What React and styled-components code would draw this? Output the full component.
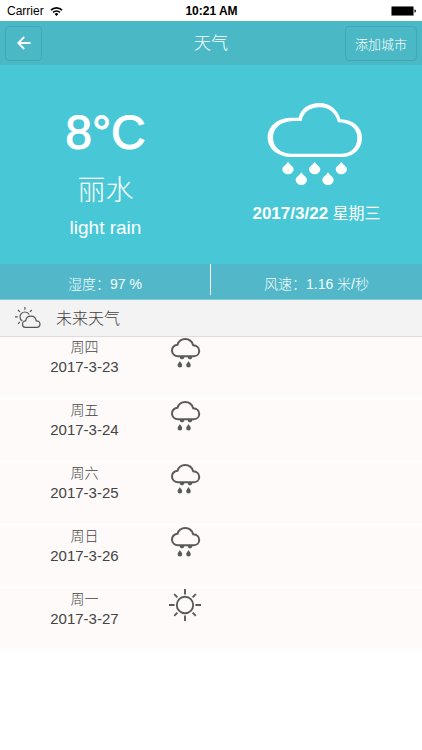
import React from "react";
import styled, { createGlobalStyle } from "styled-components";

const GlobalStyle = createGlobalStyle`
  * { box-sizing: border-box; }
  body {
    margin: 0;
    background: #fff;
    color: #444;
    font-family: "Liberation Sans", "Noto Sans CJK SC", sans-serif;
    font-size: 15px;
  }
  h1, h2, p, ul { margin: 0; padding: 0; font-weight: 300; }
  svg { display: block; }
`;

const StatusBar = styled.div`
  display: grid;
  grid-template-columns: 1fr auto 1fr;
  align-items: center;
  height: 21px;
  padding: 1px 6px 0 7px;
  color: #000;
  font-size: 12px;
`;

const Carrier = styled.div`
  display: flex;
  align-items: center;
  gap: 6px;
`;

const Battery = styled.div`
  justify-self: end;
`;

const NavBar = styled.header`
  display: grid;
  grid-template-columns: 1fr auto 1fr;
  align-items: center;
  height: 44px;
  padding: 0 5px;
  background: #4ab9c5;
  color: #fff;
`;

const NavButton = styled.button`
  justify-self: ${(p) => (p.$end ? "end" : "start")};
  display: flex;
  align-items: center;
  justify-content: center;
  height: 35px;
  min-width: 37px;
  padding: 0 9px;
  border: 1px solid #3fa9b5;
  border-radius: 4px;
  background: transparent;
  color: #fff;
  font-family: inherit;
  font-size: 13px;
  font-weight: 300;
`;

const Title = styled.h1`
  padding-top: 2px;
  font-size: 17px;
  line-height: 24px;
`;

const Current = styled.section`
  display: grid;
  grid-template-columns: 1fr 1fr;
  padding: 37px 0 24px;
  background: #48c8d6;
  color: #fff;
`;

const CurrentColumn = styled.div`
  display: flex;
  flex-direction: column;
  align-items: center;
`;

const Temperature = styled.p`
  font-size: 48px;
  line-height: 62px;
  -webkit-text-stroke: 1px #fff;
`;

const City = styled.p`
  margin-top: 6px;
  font-size: 28px;
  line-height: 42px;
`;

const Condition = styled.p`
  margin-top: 4px;
  font-size: 19px;
  line-height: 24px;
`;

const Today = styled.p`
  margin-top: 16px;
  font-size: 16px;
  line-height: 24px;
  font-weight: 400;
`;

const TodayDate = styled.strong`
  font-size: 17px;
  font-weight: 700;
`;

const Stats = styled.section`
  display: grid;
  grid-template-columns: 1fr 1fr;
  height: 36px;
  padding-bottom: 4px;
  border-bottom: 1px solid #7fcbd6;
  background: #52b8c9;
  color: #f4fcfd;
`;

const Stat = styled.p`
  display: flex;
  align-items: center;
  justify-content: center;
  padding-top: 6px;
  font-size: 14px;
  white-space: pre;

  &:first-child { border-right: 1px solid #fff; }
`;

const SectionHeader = styled.div`
  display: flex;
  align-items: center;
  gap: 15px;
  height: 37px;
  padding-left: 15px;
  border-bottom: 1px solid #dedcdc;
  background: #f3f3f3;
`;

const SectionTitle = styled.h2`
  padding-top: 2px;
  font-size: 16px;
  line-height: 24px;
`;

const Forecast = styled.ul`
  display: flex;
  flex-direction: column;
  gap: 3px;
  background: linear-gradient(#fffdfd, #fffdfd);
  list-style: none;
`;

const ForecastRow = styled.li`
  display: flex;
  align-items: flex-start;
  height: 60px;
  background: #fefaf9;
`;

const Day = styled.div`
  width: 40%;
  text-align: center;
`;

const Weekday = styled.p`
  font-size: 14px;
  line-height: 20px;
`;

const DayDate = styled.p`
  font-size: 15px;
  line-height: 20px;
`;

const WifiIcon = () => (
  <svg width="13" height="9" viewBox="0 0 13 9" fill="none" stroke="#000" aria-hidden="true">
    <path d="M1 3.2C4 .2 9 .2 12 3.2" strokeWidth="1.7" />
    <path d="M3.1 5.4C5 3.5 8 3.5 9.9 5.4" strokeWidth="1.6" />
    <path d="M6.5 8.9L4.6 6.9Q6.5 5.3 8.4 6.9Z" fill="#000" stroke="none" />
  </svg>
);

const BatteryIcon = () => (
  <svg width="25" height="10" viewBox="0 0 25 10" aria-hidden="true">
    <rect x="0" y="0" width="23" height="10" rx="1.5" fill="#777" />
    <rect x="1" y="1" width="21" height="8" fill="#000" />
    <path d="M23.5 3.3Q25 3.7 25 5T23.5 6.7Z" fill="#000" />
  </svg>
);

const BackIcon = () => (
  <svg width="14" height="14" viewBox="0 0 14 14" fill="none" stroke="#fff" strokeWidth="1.8" aria-hidden="true">
    <path d="M7.2 1L1.2 7L7.2 13M1.4 7H13.5" />
  </svg>
);

const drops = [[143, 215], [223, 215], [303, 215], [183, 247], [263, 247]];

const BigRainIcon = () => (
  <svg width="100" height="84" viewBox="80 36 300 252" fill="#fff" role="img" aria-label="rain">
    <path
      fillRule="evenodd"
      d="M155 201C112 201 82 176 82 143C82 108 112 83 154 83H175C181 55 206 39 238 39C268 39 293 59 300 88C340 89 365 112 365 144C365 178 338 201 305 201ZM155 191H304C331 191 351 172 351 144C351 116 328 97 293 97C286 69 266 52 238 52C210 52 188 67 184 93H158C122 94 98 114 98 143C98 171 122 191 155 191Z"
    />
    {drops.map(([x, y]) => (
      <path key={x} d={`M${x} ${y}c4 9 17 14 17 22a17 16 0 0 1-34 0c0-8 13-13 17-22z`} />
    ))}
  </svg>
);

const RainIcon = () => (
  <svg width="32" height="32" viewBox="0 0 32 32" fill="none" stroke="#5a5a5a" strokeWidth="2" role="img" aria-label="rain">
    <path d="M9 19.2H25C28 19.2 30.2 16.9 30.2 13.9C30.2 10.6 27.6 8.4 24.2 8.2C23 4.4 20 2 16.3 2C12.6 2 9.6 4.2 8.5 7.8C5 8.4 3 10.8 3 13.7C3 16.8 5.6 19.2 9 19.2Z" />
    <g fill="#5a5a5a" stroke="none">
      <path d="M10.8 19.6H15.2V20.4C15.2 22.8 10.8 22.8 10.8 20.4ZM18.8 19.6H23.2V20.4C23.2 22.8 18.8 22.8 18.8 20.4Z" />
      <path d="M10.9 24C11.4 25.6 13.2 26.6 13.2 28.2A2.3 2.3 0 0 1 8.6 28.2C8.6 26.6 10.4 25.6 10.9 24ZM19.5 24C20 25.6 21.8 26.6 21.8 28.2A2.3 2.3 0 0 1 17.2 28.2C17.2 26.6 19 25.6 19.5 24Z" />
    </g>
  </svg>
);

const SunIcon = () => (
  <svg width="32" height="32" viewBox="0 0 32 32" fill="none" stroke="#5a5a5a" strokeWidth="1.9" role="img" aria-label="sunny">
    <circle cx="16" cy="16" r="8.2" />
    <path d="M16 0V5.6M16 26.4V32M0 16H5.6M26.4 16H32M5.2 5.2L8.4 8.4M23.6 23.6L26.8 26.8M26.8 5.2L23.6 8.4M8.4 23.6L5.2 26.8" />
  </svg>
);

const PartlyCloudyIcon = () => (
  <svg width="26" height="22" viewBox="0 0 26 22" fill="none" stroke="#555" strokeWidth="1.2" aria-hidden="true">
    <path d="M10.2 20.4H21.6C23.7 20.4 25 18.9 25 17C25 15 23.4 13.7 21.2 13.8C20.7 11.1 18.6 9.2 15.9 9.2C13 9.2 11 11.2 10.7 13.9C8.8 13.9 7.5 15.3 7.5 17.1C7.5 19 8.7 20.4 10.2 20.4Z" />
    <path d="M7.3 14C5.8 13.1 5 11.6 5 9.9C5 7.2 7.2 5 9.9 5C11.8 5 13.3 6 14.2 7.5" />
    <path d="M9.9 0V2.8M0 9.9H2.8M3 3L4.9 4.9M16.8 3L14.9 4.9M3 16.8L4.9 14.9" />
  </svg>
);

const forecast = [
  { day: "周四", date: "2017-3-23", Icon: RainIcon },
  { day: "周五", date: "2017-3-24", Icon: RainIcon },
  { day: "周六", date: "2017-3-25", Icon: RainIcon },
  { day: "周日", date: "2017-3-26", Icon: RainIcon },
  { day: "周一", date: "2017-3-27", Icon: SunIcon },
];

export default function App() {
  return (
    <>
      <GlobalStyle />
      <StatusBar>
        <Carrier>Carrier <WifiIcon /></Carrier>
        <strong>10:21 AM</strong>
        <Battery><BatteryIcon /></Battery>
      </StatusBar>
      <NavBar>
        <NavButton type="button" aria-label="返回"><BackIcon /></NavButton>
        <Title>天气</Title>
        <NavButton type="button" $end>添加城市</NavButton>
      </NavBar>
      <main>
        <Current>
          <CurrentColumn>
            <Temperature>8°C</Temperature>
            <City>丽水</City>
            <Condition>light rain</Condition>
          </CurrentColumn>
          <CurrentColumn>
            <BigRainIcon />
            <Today><TodayDate>2017/3/22</TodayDate> 星期三</Today>
          </CurrentColumn>
        </Current>
        <Stats>
          <Stat>湿度：97 %</Stat>
          <Stat>风速：1.16 米/秒</Stat>
        </Stats>
        <SectionHeader>
          <PartlyCloudyIcon />
          <SectionTitle>未来天气</SectionTitle>
        </SectionHeader>
        <Forecast>
          {forecast.map(({ day, date, Icon }) => (
            <ForecastRow key={date}>
              <Day>
                <Weekday>{day}</Weekday>
                <DayDate>{date}</DayDate>
              </Day>
              <Icon />
            </ForecastRow>
          ))}
        </Forecast>
      </main>
    </>
  );
}
